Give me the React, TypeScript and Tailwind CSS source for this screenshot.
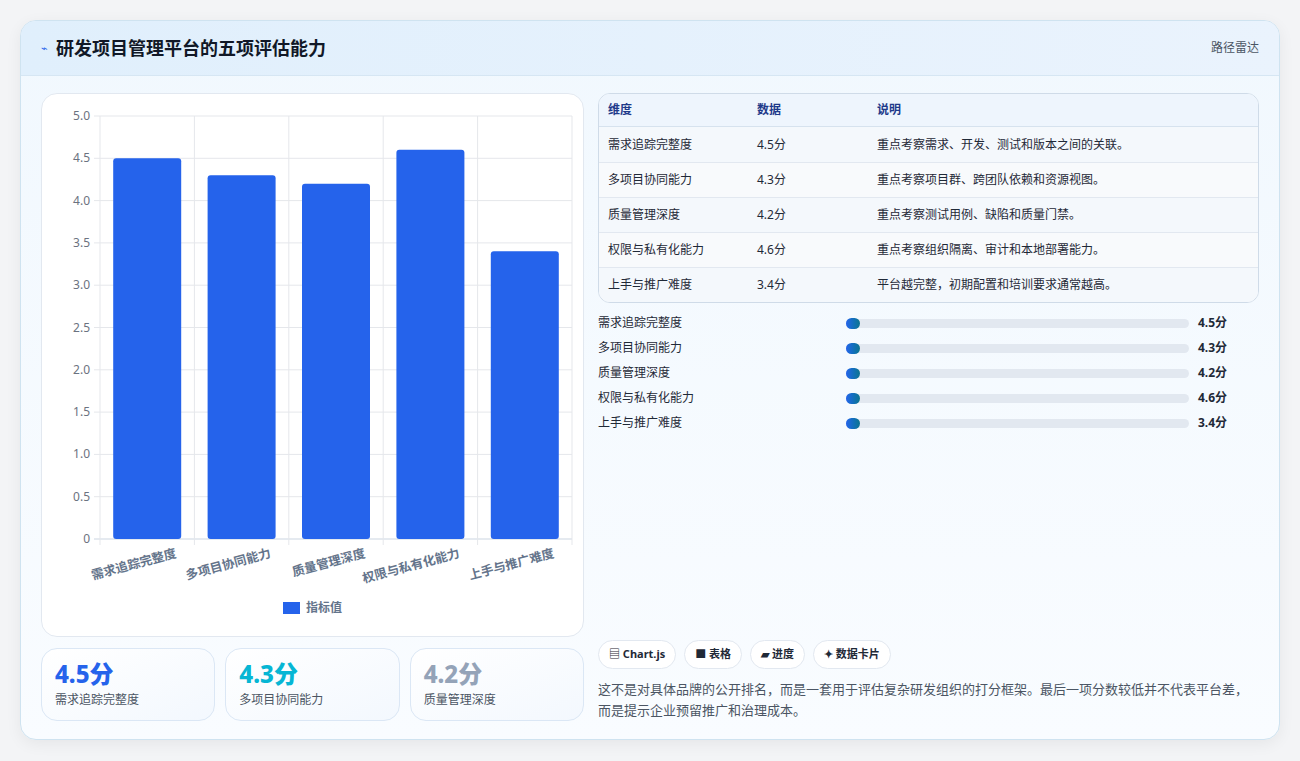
import React from "react";

const dims = [
  { n: "需求追踪完整度", v: 4.5, d: "重点考察需求、开发、测试和版本之间的关联。" },
  { n: "多项目协同能力", v: 4.3, d: "重点考察项目群、跨团队依赖和资源视图。" },
  { n: "质量管理深度", v: 4.2, d: "重点考察测试用例、缺陷和质量门禁。" },
  { n: "权限与私有化能力", v: 4.6, d: "重点考察组织隔离、审计和本地部署能力。" },
  { n: "上手与推广难度", v: 3.4, d: "平台越完整，初期配置和培训要求通常越高。" },
];

function Chart() {
  const W = 543, H = 543;
  const x0 = 58, x1 = 530, y0 = 22, y1 = 445;
  const cw = (x1 - x0) / 5;
  const ticks = [0, 0.5, 1, 1.5, 2, 2.5, 3, 3.5, 4, 4.5, 5];
  const y = (v: number) => y1 - (v / 5) * (y1 - y0);
  return (
    <svg width={W} height={H - 2} className="block">
      {ticks.map((t) => (
        <g key={t}>
          <line x1={x0 - 6} x2={x1} y1={y(t)} y2={y(t)} stroke={t === 0 ? "#cbd5e1" : "#e5e7eb"} />
          <text x={x0 - 10} y={y(t) + 4} textAnchor="end" fontSize="12" fill="#6b7280">{t === 0 ? "0" : t.toFixed(1)}</text>
        </g>
      ))}
      {[0, 1, 2, 3, 4, 5].map((i) => (
        <line key={i} x1={x0 + i * cw} x2={x0 + i * cw} y1={y0} y2={y1 + 6} stroke="#e5e7eb" />
      ))}
      {dims.map((d, i) => {
        const cx = x0 + cw * (i + 0.5);
        return (
          <g key={d.n}>
            <rect x={cx - 34} y={y(d.v)} width={68} height={y1 - y(d.v)} rx={3} fill="#2563eb" />
            <text
              x={cx + 30}
              y={y1 + 18}
              textAnchor="end"
              fontSize="12.5"
              fontWeight="700"
              fill="#64748b"
              transform={`rotate(-15 ${cx + 30} ${y1 + 18})`}
            >{d.n}</text>
          </g>
        );
      })}
      <rect x={241} y={508} width={17} height={12} fill="#2563eb" />
      <text x={264} y={518} fontSize="12" fill="#64748b" fontWeight="700">指标值</text>
    </svg>
  );
}

export default function App() {
  return (
    <div className="min-h-[761px] bg-[#f3f4f6] p-5" style={{ fontFamily: '"Noto Sans", "Noto Sans CJK SC", sans-serif' }}>
      <div className="rounded-2xl border border-[#cfe3f0] bg-gradient-to-b from-[#f1f8fe] to-[#f9fcff] overflow-hidden shadow-[0_4px_16px_rgba(0,0,0,0.06)]">
        <div className="h-[55px] flex items-center justify-between px-5 bg-gradient-to-r from-[#e0effc] to-[#eaf3fd] border-b border-[#d6e6f3]">
          <div className="flex items-center gap-2">
            <span className="text-[11px] text-[#2563eb]">⌁</span>
            <span className="text-[18px] font-bold text-[#111827]">研发项目管理平台的五项评估能力</span>
          </div>
          <span className="text-[12px] text-[#4b5563]">路径雷达</span>
        </div>
        <div className="flex gap-[14px] px-5 pt-[17px] pb-[18px]">
          <div className="w-[543px] flex flex-col gap-[11px]">
            <div className="h-[544px] bg-white rounded-2xl border border-[#e2e8f0]">
              <Chart />
            </div>
            <div className="grid grid-cols-3 gap-[10px]">
              {[
                ["4.5分", "text-[#2563eb]", dims[0].n],
                ["4.3分", "text-[#06b6d4]", dims[1].n],
                ["4.2分", "text-[#94a3b8]", dims[2].n],
              ].map(([v, c, n]) => (
                <div key={n} className="h-[73px] rounded-2xl border border-[#dbe7f5] bg-gradient-to-br from-white to-[#f3f8fe] px-[13px] pt-[10px]">
                  <div className={`text-[24px] leading-[30px] font-extrabold ${c}`}>{v}</div>
                  <div className="text-[12px] text-[#4b5563] mt-[2px]">{n}</div>
                </div>
              ))}
            </div>
          </div>
          <div className="flex-1 flex flex-col">
            <div className="rounded-xl border border-[#cfdbe8] overflow-hidden bg-white">
              <div className="flex h-[33px] items-center bg-[#eef5fd] border-b border-[#d6e2ee] text-[12px] font-bold text-[#1e3a8a]">
                <div className="w-[158px] pl-[9px]">维度</div>
                <div className="w-[120px]">数据</div>
                <div>说明</div>
              </div>
              {dims.map((d, i) => (
                <div key={d.n} className={`flex h-[35px] items-center text-[12px] text-[#1f2937] ${i ? "border-t border-[#e2e8f0]" : ""} ${i % 2 ? "bg-[#f8fafc]" : "bg-[#f4f8fc]"}`}>
                  <div className="w-[158px] pl-[9px]">{d.n}</div>
                  <div className="w-[120px]">{d.v}分</div>
                  <div>{d.d}</div>
                </div>
              ))}
            </div>
            <div className="flex flex-col gap-[9px] mt-[12px]">
              {dims.map((d) => (
                <div key={d.n} className="flex items-center h-[16px] text-[12px]">
                  <div className="w-[248px] text-[#1f2937]">{d.n}</div>
                  <div className="w-[343px] h-[9px] rounded-full bg-[#e2e8f0] relative">
                    <div className="absolute left-0 top-[-1px] w-[14px] h-[11px] rounded-full bg-gradient-to-r from-[#2563eb] to-[#0e7490]" />
                  </div>
                  <div className="ml-[9px] font-bold text-[#1f2937]">{d.v}分</div>
                </div>
              ))}
            </div>
            <div className="flex-1" />
            <div className="flex gap-2 text-[11px] font-bold text-[#1f2937]">
              {["▤ Chart.js", "■ 表格", "▰ 进度", "✦ 数据卡片"].map((t) => (
                <span key={t} className="h-[29px] px-[10px] flex items-center rounded-full border border-[#e2e8f0] bg-white">{t}</span>
              ))}
            </div>
            <p className="mt-[10px] text-[13px] leading-[21px] text-[#4b5563]">
              这不是对具体品牌的公开排名，而是一套用于评估复杂研发组织的打分框架。最后一项分数较低并不代表平台差，而是提示企业预留推广和治理成本。
            </p>
          </div>
        </div>
      </div>
    </div>
  );
}
